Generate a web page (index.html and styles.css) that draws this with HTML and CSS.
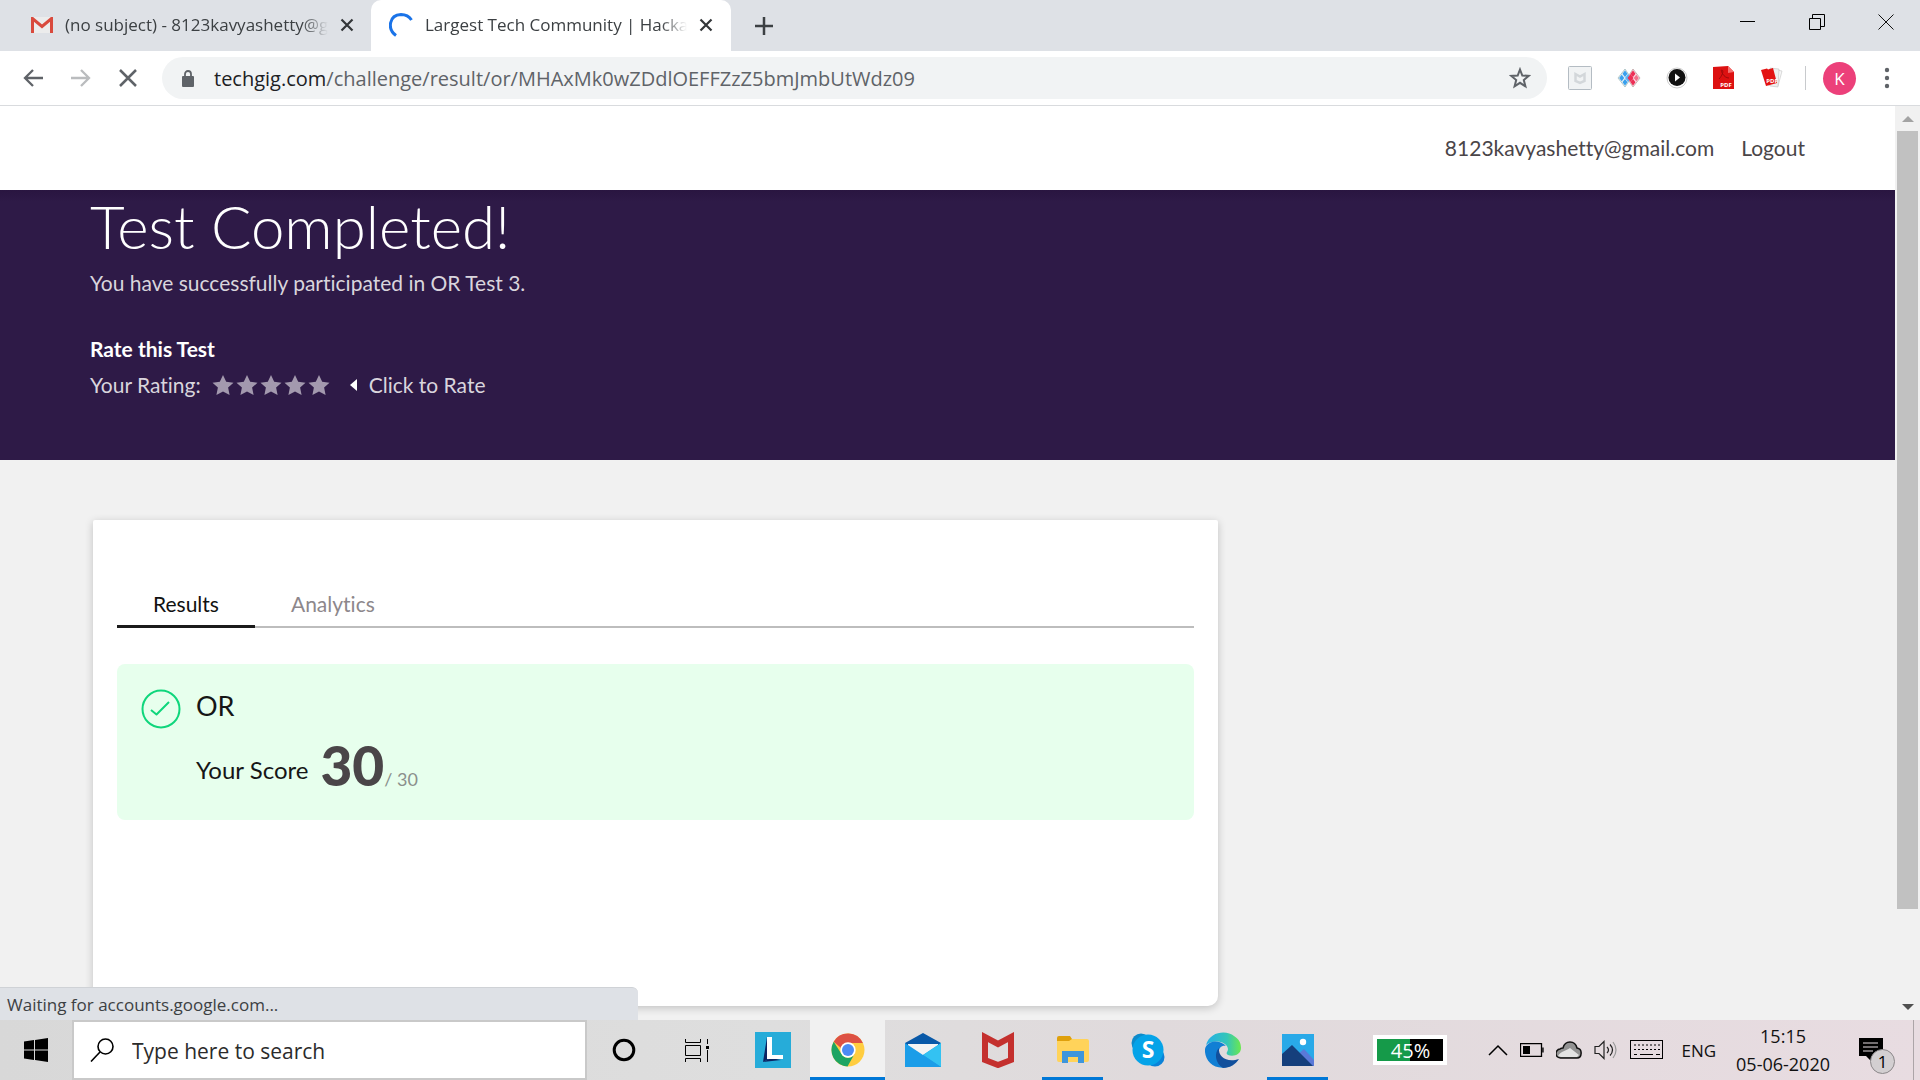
FILE: index.html
```html
<!DOCTYPE html>
<html lang="en">
<head>
<meta charset="utf-8">
<meta name="viewport" content="width=device-width, initial-scale=1">
<title>Largest Tech Community | Hackathons</title>
<link rel="stylesheet" href="styles.css">
</head>
<body>
<div class="tabstrip">
  <div class="tab">
    <svg class="favicon" width="22" height="16" viewBox="0 0 22 16"><rect width="22" height="16" rx="1" fill="#ececec"/><path d="M1.500 16V1.500L11 9.500L20.500 1.500V16" fill="none" stroke="#d94a3d" stroke-width="3"/></svg>
    <span class="tab-title">(no subject) - 8123kavyashetty@gmail.com</span>
    <button class="icon-button tab-close" aria-label="Close tab"><svg width="14" height="14" viewBox="0 0 14 14"><path d="M1.500 1.500l11 11M12.500 1.500l-11 11" stroke="#333639" stroke-width="2.200"/></svg></button>
  </div>
  <div class="tab tab-active">
    <svg class="favicon" width="24" height="24" viewBox="0 0 24 24"><path d="M7 22.500C-2 16 0 2 12 1.500Q19 1.500 22.500 7" fill="none" stroke="#1a73e8" stroke-width="3"/></svg>
    <span class="tab-title">Largest Tech Community | Hackathons</span>
    <button class="icon-button tab-close" aria-label="Close tab"><svg width="14" height="14" viewBox="0 0 14 14"><path d="M1.500 1.500l11 11M12.500 1.500l-11 11" stroke="#333639" stroke-width="2.200"/></svg></button>
  </div>
  <button class="icon-button new-tab" aria-label="New tab"><svg width="18" height="18" viewBox="0 0 18 18"><path d="M9 0v18M0 9h18" stroke="#3c4043" stroke-width="2.500"/></svg></button>
  <div class="window-controls">
    <button class="icon-button" aria-label="Minimize"><svg width="16" height="16"><path d="M0 7.500h15" stroke="#000"/></svg></button>
    <button class="icon-button" aria-label="Restore"><svg width="16" height="16" fill="none" stroke="#000"><path d="M.5 4.500h11v11H.5zM3.500 4.500v-4h12v12h-4"/></svg></button>
    <button class="icon-button" aria-label="Close"><svg width="16" height="16"><path d="M.5 .5l15 15M15.500 .5l-15 15" stroke="#111"/></svg></button>
  </div>
</div>

<div class="toolbar">
  <button class="icon-button nav" aria-label="Back"><svg width="20" height="18" viewBox="0 0 20 18"><path d="M20 9H2M10 1L2 9l8 8" fill="none" stroke="#5f6368" stroke-width="2.300"/></svg></button>
  <button class="icon-button nav" aria-label="Forward"><svg width="20" height="18" viewBox="0 0 20 18"><path d="M0 9h18M10 1l8 8-8 8" fill="none" stroke="#babcbe" stroke-width="2.300"/></svg></button>
  <button class="icon-button nav" aria-label="Stop"><svg width="18" height="18" viewBox="0 0 18 18"><path d="M1 1l16 16M17 1L1 17" stroke="#5f6368" stroke-width="2.500"/></svg></button>
  <div class="omnibox">
    <svg width="12" height="17" viewBox="0 0 12 17"><rect y="6" width="12" height="11" rx="1" fill="#5f6368"/><path d="M3 7V4a3 3 0 0 1 6 0v3" fill="none" stroke="#5f6368" stroke-width="1.800"/></svg>
    <a class="url" href="#"><span class="host">techgig.com</span>/challenge/result/or/MHAxMk0wZDdlOEFFZzZ5bmJmbUtWdz09</a>
    <button class="icon-button" aria-label="Bookmark"><svg width="22" height="22" viewBox="0 0 22 22"><path d="M11 2.500l2.300 6 6.400.4-4.900 4.100 1.600 6.300L11 15.800l-5.400 3.500L7.200 13 2.300 8.900l6.400-.4z" fill="none" stroke="#5f6368" stroke-width="2"/></svg></button>
  </div>
  <div class="extensions">
    <button class="icon-button" aria-label="McAfee WebAdvisor"><svg width="24" height="24" viewBox="0 0 24 24"><rect x=".5" y=".5" width="23" height="23" rx="1" fill="#f1f3f4" stroke="#b4bcc3"/><path d="M7.500 8v7l4.500 2 4.500-2V8L12 10.500z" fill="none" stroke="#d3d7da" stroke-width="2.500"/></svg></button>
    <button class="icon-button" aria-label="Diamonds"><svg width="24" height="20" viewBox="0 0 24 20"><path d="M1 10l7-9 6 9-6 9z" fill="#e3eef5" stroke="#8aa" stroke-width=".6"/><path d="M10 10l6-9 7 9-7 9z" fill="#fbdbe2" stroke="#a88" stroke-width=".6"/><path d="M8 2.500l2.500 3.300L8 9 5.500 5.800zM4.700 6.700L7.200 10l-2.500 3.300L2.200 10zM8 11l2.500 3.200L8 17.500l-2.500-3.300z" fill="#39a0ed"/><path d="M11 6l3 4-3 4-3-4z" fill="#5bb4f5"/><path d="M16 2.500l2.500 3.300L16 9l-2.500-3.200zM16 11l2.500 3.200-2.500 3.300-2.500-3.300zM13.500 6l3 4-3 4-3-4z" fill="#ec2f55"/><path d="M19.300 6.700l2.500 3.300-2.500 3.300L16.800 10z" fill="#f2708a"/></svg></button>
    <button class="icon-button" aria-label="Player"><svg width="22" height="22" viewBox="0 0 22 22"><circle cx="11" cy="11" r="10" fill="#fff" stroke="#ccc"/><circle cx="11" cy="10.500" r="8.500" fill="#111"/><path d="M9 6.500v8l5-4z" fill="#fff"/></svg></button>
    <button class="icon-button" aria-label="PDF"><svg width="22" height="24" viewBox="0 0 22 24"><path d="M0 1l15-1 6 6v17H0z" fill="#dd1111"/><path d="M15 0l6 6-6 1z" fill="#f57070"/><path d="M6 13c3-3 5-8 3-9s1 8 7 8" fill="none" stroke="#9d0b0b"/><text x="13" y="21" class="pdf-label">PDF</text></svg></button>
    <button class="icon-button" aria-label="PDF merge"><svg width="24" height="22" viewBox="0 0 24 22"><path d="M12 2l10 2-4 15-10-1z" fill="#f7f7f7" stroke="#ccc" stroke-width=".7"/><path d="M10 1l9 1-1 18-8-1z" fill="#eee" stroke="#bbb" stroke-width=".5"/><path d="M1 3l6-1.500 1 1L13 1l4 15-11 3z" fill="#e31212"/><text x="12" y="16" class="pdf-label">PDF</text></svg></button>
  </div>
  <button class="avatar" aria-label="Profile">K</button>
  <button class="icon-button menu" aria-label="Menu"><svg width="6" height="22" viewBox="0 0 6 22" fill="#5f6368"><circle cx="3" cy="3" r="2.200"/><circle cx="3" cy="11" r="2.200"/><circle cx="3" cy="19" r="2.200"/></svg></button>
</div>

<div class="viewport">
  <div class="page">
    <header class="site-header">
      <a href="#">8123kavyashetty@gmail.com</a>
      <a href="#">Logout</a>
    </header>
    <section class="hero">
      <h1>Test Completed!</h1>
      <p>You have successfully participated in OR Test 3.</p>
      <h2>Rate this Test</h2>
      <div class="rating">
        <span>Your Rating:</span>
        <span class="stars">
          <button class="icon-button" aria-label="1 star"><svg width="22" height="20" viewBox="0 0 22 20"><path d="M11 0l3.200 6.800 7.300.9-5.400 4.900 1.500 7.400-6.600-3.600L4.400 20l1.500-7.400L.5 7.700l7.300-.9z"/></svg></button>
          <button class="icon-button" aria-label="2 stars"><svg width="22" height="20" viewBox="0 0 22 20"><path d="M11 0l3.200 6.800 7.300.9-5.400 4.900 1.500 7.400-6.600-3.600L4.400 20l1.500-7.400L.5 7.700l7.300-.9z"/></svg></button>
          <button class="icon-button" aria-label="3 stars"><svg width="22" height="20" viewBox="0 0 22 20"><path d="M11 0l3.200 6.800 7.300.9-5.400 4.900 1.500 7.400-6.600-3.600L4.400 20l1.500-7.400L.5 7.700l7.300-.9z"/></svg></button>
          <button class="icon-button" aria-label="4 stars"><svg width="22" height="20" viewBox="0 0 22 20"><path d="M11 0l3.200 6.800 7.300.9-5.400 4.900 1.500 7.400-6.600-3.600L4.400 20l1.500-7.400L.5 7.700l7.300-.9z"/></svg></button>
          <button class="icon-button" aria-label="5 stars"><svg width="22" height="20" viewBox="0 0 22 20"><path d="M11 0l3.200 6.800 7.300.9-5.400 4.900 1.500 7.400-6.600-3.600L4.400 20l1.500-7.400L.5 7.700l7.300-.9z"/></svg></button>
        </span>
        <svg width="7" height="12" viewBox="0 0 7 12"><path d="M7 0v12L0 6z" fill="#fff"/></svg>
        <span class="rate-hint">Click to Rate</span>
      </div>
    </section>
    <main class="card">
      <nav class="result-tabs">
        <a class="current" href="#">Results</a>
        <a href="#">Analytics</a>
      </nav>
      <section class="score-panel">
        <svg width="40" height="40" viewBox="0 0 40 40" fill="none" stroke="#0fd67c" stroke-width="2"><circle cx="20" cy="20" r="18.500"/><path d="M10 21l5.500 4.500L28 13" stroke-linejoin="round"/></svg>
        <div>
          <h3>OR</h3>
          <p class="score"><span class="score-label">Your Score</span><span><strong>30</strong><small>/ 30</small></span></p>
        </div>
      </section>
    </main>
  </div>
  <div class="scrollbar">
    <svg width="12" height="6"><path d="M0 6l6-6 6 6z" fill="#a3a3a3"/></svg>
    <div class="track"><div class="thumb"></div></div>
    <svg width="12" height="6"><path d="M0 0l6 6 6-6z" fill="#505050"/></svg>
  </div>
  <div class="status">Waiting for accounts.google.com...</div>
</div>

<footer class="taskbar">
  <button class="icon-button start" aria-label="Start"><svg width="24" height="24" viewBox="0 0 24 24"><path d="M0 3.500l10-1.400v9.400H0zM11 2l13-2v11.500H11zM0 12.500h10v9.400L0 20.500zM11 12.500h13V24l-13-2z"/></svg></button>
  <label class="search">
    <svg width="24" height="24" viewBox="0 0 24 24" fill="none" stroke="#000" stroke-width="1.600"><circle cx="15.500" cy="8.500" r="7.500"/><path d="M10 14L1 23.500"/></svg>
    <input type="text" placeholder="Type here to search" aria-label="Search">
  </label>
  <div class="apps">
    <button class="icon-button app app-system" aria-label="Cortana"><svg width="24" height="24"><circle cx="12" cy="12" r="9.800" fill="none" stroke="#000" stroke-width="3"/></svg></button>
    <button class="icon-button app app-system" aria-label="Task View"><svg width="24" height="24" fill="none" stroke="#000"><path d="M.5 1v3.500h15V1M.5 7.500h15v10H.5zM.5 24v-3.500h15V24M22.500 1v5M22.500 12v12"/><path d="M21 8h3v3h-3z" fill="#000" stroke="none"/></svg></button>
    <button class="icon-button app" aria-label="Lenovo"><svg width="36" height="36" viewBox="0 0 36 36"><path fill="#26acd9" d="M0 0h36v36H0z"/><path d="M12 5L8 30l8-4z" fill="#0b2463"/><path d="M8 30l8-4 10 2z" fill="#0b2463"/><path d="M12 5h5v18h11v4H12z" fill="#fff"/></svg></button>
    <button class="icon-button app app-active app-open" aria-label="Chrome"><svg width="34" height="34" viewBox="0 0 34 34"><circle cx="17" cy="17" r="16.500" fill="#ffcd40"/><path d="M2.700 8.700A16.500 16.500 0 0 1 31.900 10H17a7.500 7.500 0 0 0-7 5z" fill="#dd5144"/><path d="M2.700 8.700A16.500 16.500 0 0 0 16.500 33.500l7-12.500a7.500 7.500 0 0 1-13 0z" fill="#1da462"/><circle cx="17" cy="17" r="7.700" fill="#fff"/><circle cx="17" cy="17" r="6" fill="#4c8bf5"/></svg></button>
    <button class="icon-button app" aria-label="Mail"><svg width="36" height="34" viewBox="0 0 36 34"><path d="M0 10L18 0l18 10v6H0z" fill="#0959a8"/><path d="M3 11h30v12H3z" fill="#f4f4f4"/><path d="M0 10l18 12 18-12v24H0z" fill="#1b9de8"/><path d="M18 22l18-12v24z" fill="#33c2f2"/><path d="M0 34h36L18 22z" fill="#1b9de8"/></svg></button>
    <button class="icon-button app" aria-label="McAfee"><svg width="32" height="36" viewBox="0 0 32 36"><path d="M3 5v23l13 5 13-5V5L16 12z" fill="none" stroke="#c4302e" stroke-width="6"/></svg></button>
    <button class="icon-button app app-open" aria-label="File Explorer"><svg width="32" height="28" viewBox="0 0 32 28"><path d="M0 2q0-2 2-2h11l2 3v4H0z" fill="#dfa00c"/><path d="M0 5h12l3-2h15q2 0 2 2v19q0 2-2 2H2q-2 0-2-2z" fill="#ffd35a"/><path d="M5 15h22v12h-6v-6H11v6H5z" fill="#3e96dc"/></svg></button>
    <button class="icon-button app" aria-label="Skype"><svg width="34" height="34" viewBox="0 0 34 34"><circle cx="10" cy="10" r="9.500" fill="#0d8bcb"/><circle cx="24" cy="24" r="9.500" fill="#0b82d8"/><circle cx="17" cy="17" r="15.500" fill="#05a3e8"/><text x="17" y="25" class="skype-letter">S</text></svg></button>
    <button class="icon-button app" aria-label="Edge"><svg width="36" height="36" viewBox="0 0 36 36"><defs><linearGradient id="wave"><stop stop-color="#25aee8"/><stop offset=".6" stop-color="#34c6b8"/><stop offset="1" stop-color="#6be84f"/></linearGradient></defs><path d="M1 13C5-1 22-2 29 4c5 3 7 7 7 12 0 7-8 9-13 7-3-2 0-3 0-6-1-8-15-10-22-4z" fill="url(#wave)"/><path d="M0 17C2 8 15 7 21 14c-5-1-8 3-7 8 1 7 6 12 12 12C10 40-1 29 0 17z" fill="#117fd4"/><path d="M14 16c-1 9 8 15 20 11-3 5-9 9-16 9-8-5-9-15-4-20z" fill="#114f9c"/></svg></button>
    <button class="icon-button app app-open" aria-label="Photos"><svg width="32" height="32" viewBox="0 0 32 32"><path fill="#29a9e8" d="M0 0h32v32H0z"/><path d="M15 22l7-7 10 11V14L24 6z" fill="#29a9e8"/><path d="M14 22l8-7 10 11v6H16z" fill="#5a79d8"/><path d="M0 20l10-9 21 21H0z" fill="#153f7c"/><circle cx="21" cy="8" r="3.200" fill="#fff"/></svg></button>
  </div>
  <div class="tray">
    <div class="battery-meter">45%</div>
    <button class="icon-button" aria-label="Show hidden icons"><svg width="20" height="12"><path d="M1 11l9-9 9 9" fill="none" stroke="#000" stroke-width="1.500"/></svg></button>
    <svg width="24" height="14"><path d="M.5 .5h21v13H.5zM23 4.500v5" fill="none" stroke="#000" stroke-width="1.300"/><path d="M3 3h7v8H3z"/></svg>
    <svg width="26" height="18" viewBox="0 0 26 18"><path d="M5 17a4.500 4.500 0 0 1-1-9c1-1 2-1 3-1 2-8 12-8 14 0 6 1 5 10 0 10z" fill="#929292" stroke="#111" stroke-width="1.500"/><path d="M2 15c3-5 8-5 12-8l9 7-2 2H5z" fill="#e3e3e3"/></svg>
    <svg width="24" height="20" viewBox="0 0 24 20" fill="none" stroke="#222" stroke-width="1.200"><path d="M1 6.500h4l5-5v17l-5-5H1zM13 7q3 3 0 6M16 4.500q5 5.500 0 11"/><path d="M19 2q6 8 0 16" stroke="#999"/></svg>
    <svg width="34" height="20" viewBox="0 0 34 20" fill="none" stroke="#000"><rect x=".5" y=".5" width="32" height="18"/><path d="M4 5h26M4 9.500h26" stroke-dasharray="2 2"/><path d="M4 14.500h3M10 14.500h13M26 14.500h4"/></svg>
    <span class="lang">ENG</span>
    <time class="clock" datetime="2020-06-05T15:15">15:15<br>05-06-2020</time>
    <button class="icon-button notice" aria-label="Notifications"><svg width="24" height="24" viewBox="0 0 24 24"><path d="M0 0h24v18H13v6l-6-6H0z"/><path d="M4 5h15M4 9h15M4 13h10" stroke="#e5dce0"/></svg><span class="badge">1</span></button>
  </div>
</footer>
</body>
</html>
```

FILE: styles.css
```css
* { box-sizing: border-box; }

body {
  margin: 0;
  height: 100vh;
  display: flex;
  flex-direction: column;
  overflow: hidden;
  font-family: "Open Sans", "Noto Sans", sans-serif;
  color: #3c4043;
}

h1, h2, h3, p { margin: 0; font-weight: 400; }
a { color: inherit; text-decoration: none; }
svg { display: block; flex: none; }

.icon-button {
  display: flex;
  align-items: center;
  justify-content: center;
  flex: none;
  padding: 0;
  border: 0;
  background: none;
}

/* Browser tabs */
.tabstrip {
  display: flex;
  align-items: center;
  flex: none;
  height: 51px;
  background: #dee1e6;
}
.tab {
  display: flex;
  align-items: center;
  align-self: stretch;
  width: 360px;
  padding: 0 18px 2px;
  font-size: 17px;
}
.tab:first-child { width: 371px; padding-left: 31px; padding-right: 17px; }
.tab-active {
  background: #fff;
  border-radius: 10px 10px 0 0;
}
.favicon { margin-right: 12px; }
.tab-title {
  flex: 1;
  min-width: 0;
  overflow: hidden;
  white-space: nowrap;
  -webkit-mask-image: linear-gradient(to right, #000 90%, transparent);
  mask-image: linear-gradient(to right, #000 90%, transparent);
}
.tab-close { margin-left: 12px; }
.new-tab { margin-left: 24px; }
.window-controls {
  display: flex;
  gap: 53px;
  margin-left: auto;
  padding: 0 26px 8px 0;
}

/* Toolbar */
.toolbar {
  display: flex;
  align-items: center;
  flex: none;
  height: 55px;
  padding: 0 30px 0 23px;
  background: #fff;
  border-bottom: 1px solid #d9dbde;
}
.nav { margin-right: 28px; }
.nav + .nav + .nav { margin-right: 25px; }
.omnibox {
  display: flex;
  align-items: center;
  flex: 1;
  height: 42px;
  padding: 0 16px 0 20px;
  border-radius: 21px;
  background: #f1f3f4;
}
.url {
  flex: 1;
  margin-left: 20px;
  font-size: 20px;
  color: #5f6368;
}
.host { color: #202124; }
.extensions {
  display: flex;
  align-items: center;
  gap: 25px;
  height: 24px;
  margin-left: 21px;
  padding-right: 21px;
  border-right: 1px solid #c8cacd;
}
.pdf-label {
  font: 700 6px "Open Sans", sans-serif;
  fill: #fff;
  text-anchor: middle;
}
.avatar {
  width: 33px;
  height: 33px;
  margin-left: 17px;
  padding: 0;
  border: 0;
  border-radius: 50%;
  background: #ec407a;
  color: #fff;
  font: 17px "Open Sans", sans-serif;
}
.menu { margin-left: 28px; }

/* Web page */
.viewport {
  position: relative;
  display: flex;
  flex: 1;
  min-height: 0;
  overflow: hidden;
}
.page {
  flex: 1;
  overflow: hidden;
  background: #f1f1f1;
  font-family: Lato, sans-serif;
  font-size: 21px;
  line-height: 24px;
  font-variant-ligatures: none;
}
.site-header {
  display: flex;
  align-items: center;
  justify-content: flex-end;
  gap: 27px;
  height: 84px;
  padding: 0 90px;
  background: #fff;
  color: #4a4548;
}
.hero {
  height: 270px;
  padding: 0 90px;
  background: linear-gradient(#291540, #2e1a47 12px);
  color: #d9d5dd;
}
.hero h1 {
  font-size: 60px;
  line-height: 72px;
  font-weight: 300;
  color: #fff;
}
.hero p { margin-top: 9px; }
.hero h2 {
  margin-top: 42px;
  font-size: 21px;
  line-height: 24px;
  font-weight: 700;
  color: #fff;
}
.rating {
  display: flex;
  align-items: center;
  margin-top: 12px;
}
.stars {
  display: flex;
  gap: 2px;
  margin: 0 20px 0 11px;
  fill: #a399ae;
}
.rate-hint { margin-left: 12px; }

.card {
  width: 1125px;
  max-width: calc(100% - 186px);
  height: 486px;
  margin: 60px 93px;
  padding: 72px 24px 0;
  background: #fff;
  border-radius: 2px 2px 10px 10px;
  box-shadow: 0 2px 8px rgba(0, 0, 0, .2);
}
.result-tabs {
  display: flex;
  height: 36px;
  box-shadow: inset 0 -2px #bdbdbd;
  color: #8d878b;
}
.result-tabs a { padding: 0 36px; }
.result-tabs .current {
  border-bottom: 3px solid #1b1b1b;
  color: #111;
}
.score-panel {
  display: flex;
  gap: 15px;
  height: 156px;
  margin-top: 36px;
  padding: 25px 24px;
  border-radius: 8px;
  background: #e7ffed;
  color: #161616;
}
.score-panel h3 { font-size: 27px; line-height: 34px; }
.score {
  display: flex;
  align-items: flex-end;
  gap: 12px;
  margin-top: 14px;
  font-size: 24px;
  line-height: 56px;
}
.score-label { padding-bottom: 15px; line-height: 44px; }
.score strong {
  font-size: 55px;
  font-weight: 900;
  color: #4a4548;
}
.score small { font-size: 18px; color: #8b8f8c; }

.scrollbar {
  display: flex;
  flex-direction: column;
  align-items: center;
  gap: 9px;
  width: 25px;
  padding: 10px 2px;
  background: #f1f1f1;
}
.track { flex: 1; width: 21px; }
.thumb { height: 90%; background: #c1c1c1; }

.status {
  position: absolute;
  left: 0;
  bottom: 0;
  width: 638px;
  height: 33px;
  padding-left: 7px;
  border-top: 1px solid #cfd2d6;
  border-radius: 0 6px 0 0;
  background: #dee1e6;
  font-size: 17px;
  line-height: 34px;
}

/* Taskbar */
.taskbar {
  display: flex;
  flex: none;
  height: 60px;
  background: linear-gradient(to right, #d8d8d8, #dedede 40%, #e0dadc 60%, #e8dce1);
  color: #111;
}
.start { width: 72px; }
.search {
  display: flex;
  align-items: center;
  width: 515px;
  padding: 0 16px;
  border: 2px solid #c9c9c9;
  background: #fff;
}
.search input {
  flex: 1;
  min-width: 0;
  margin-left: 18px;
  padding: 2px 0 0;
  border: 0;
  outline: 0;
  font: 21px "Open Sans", sans-serif;
}
.search input::placeholder { color: #2b2b2b; opacity: 1; }
.apps { display: flex; }
.app { width: 75px; border-bottom: 3px solid transparent; border-top: 3px solid transparent; }
.app-system { width: 73px; }
.app-system + .app:not(.app-system) { margin-left: 2px; }
.app-open { border-image: linear-gradient(to right, transparent 7px, #0078d7 7px, #0078d7 68px, transparent 68px) 0 0 3 0; }
.app-active { background: #f1f1f1; border-image: none; border-bottom-color: #0078d7; border-top-color: #f1f1f1; }
.tray {
  display: flex;
  align-items: center;
  gap: 12px;
  margin-left: auto;
  margin-right: 6px;
  padding-right: 18px;
  border-right: 1px solid #aca5a8;
}
.battery-meter {
  width: 74px;
  height: 30px;
  margin-right: 29px;
  border: 4px solid #fff;
  background: linear-gradient(to right, #159a49 50%, #000 50%);
  color: #fff;
  font-size: 20px;
  line-height: 23px;
  text-align: center;
}
.lang { font-size: 17px; margin: 0 8px 0 5px; }
.clock {
  font-size: 18px;
  line-height: 28px;
  text-align: center;
}
.notice { position: relative; width: 36px; height: 36px; margin-left: 17px; justify-content: flex-start; }
.badge {
  position: absolute;
  right: 0;
  bottom: -6px;
  width: 25px;
  height: 25px;
  border: 1px solid #8b8789;
  border-radius: 50%;
  background: #d3cfd1;
  font: 17px/23px "Open Sans", sans-serif;
  text-align: center;
}
.skype-letter {
  font: 700 23px "Open Sans", sans-serif;
  fill: #fff;
  text-anchor: middle;
}
```
